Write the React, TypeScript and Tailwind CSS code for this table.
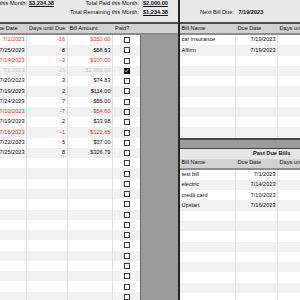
import React from "react";

type Row = { date?: string; days?: string; amt?: string; red?: boolean; paid?: boolean };

const leftRows: Row[] = [
  { date: "7/1/2023", days: "-16", amt: "$250.00", red: true },
  { date: "7/25/2023", days: "8", amt: "$58.53" },
  { date: "7/14/2023", days: "-3", amt: "$107.00", red: true },
  { date: "7/1/2023", days: "-16", amt: "$2,000.00", paid: true },
  { date: "7/20/2023", days: "3", amt: "$74.83" },
  { date: "7/19/2023", days: "2", amt: "$114.00" },
  { date: "7/24/2023", days: "7", amt: "$55.00" },
  { date: "7/10/2023", days: "-7", amt: "$54.60", red: true },
  { date: "7/19/2023", days: "2", amt: "$33.98" },
  { date: "7/16/2023", days: "-1", amt: "$122.65", red: true },
  { date: "7/22/2023", days: "5", amt: "$37.00" },
  { date: "7/25/2023", days: "8", amt: "$326.79" },
];
while (leftRows.length < 27) leftRows.push({});

const upcoming = [
  { name: "car insurance", date: "7/19/2023" },
  { name: "Affirm", date: "7/19/2023" },
];
const pastDue = [
  { name: "test bill", date: "7/1/2023" },
  { name: "electric", date: "7/14/2023" },
  { name: "credit card", date: "7/10/2023" },
  { name: "Upstart", date: "7/16/2023" },
];

function Box({ checked }: { checked?: boolean }) {
  if (checked) {
    return (
      <div className="w-[6px] h-[6px] bg-[#111] flex items-center justify-center">
        <svg viewBox="0 0 6 6" className="w-[5px] h-[5px]">
          <path d="M1 3.1 L2.4 4.5 L5 1.3" stroke="white" strokeWidth="1" fill="none" />
        </svg>
      </div>
    );
  }
  return <div className="w-[6px] h-[6px] bg-white border border-[#3a3a3a]" />;
}

function BillRows({ items, count }: { items: { name: string; date: string }[]; count: number }) {
  const rows = Array.from({ length: count }, (_, i) => items[i]);
  return (
    <>
      {rows.map((r, i) => (
        <div key={i} className={`flex h-[10.27px] shrink-0 items-center ${i % 2 === 0 ? "bg-white" : "bg-[#f2f2f2]"}`}>
          <div className="w-[56px] h-full flex items-center pl-[1.5px] border-r border-[#e2e2e2] whitespace-nowrap">{r?.name}</div>
          <div className="w-[42px] h-full flex items-center justify-end pr-[1.5px] border-r border-[#e2e2e2]">{r?.date}</div>
          <div className="w-[45px] h-full border-r border-[#e2e2e2]" />
        </div>
      ))}
    </>
  );
}

function BillHeader() {
  return (
    <div className="flex h-[9px] shrink-0 items-center bg-[#d2d2d2] whitespace-nowrap">
      <div className="w-[56px] pl-[1.5px]">Bill Name</div>
      <div className="w-[42px] pl-[1.5px]">Due Date</div>
      <div className="w-[45px] pl-[1.5px]">Days until Due</div>
    </div>
  );
}

export default function App() {
  return (
    <div className="w-[300px] h-[300px] overflow-hidden bg-white text-[#111] text-[5.6px] leading-none font-['Liberation_Sans',Arial,sans-serif]">
      <div className="flex ml-[-9px] w-[420px] h-[300px]">
        {/* LEFT */}
        <div className="w-[187px] shrink-0 flex flex-col">
          <div className="h-[24px] shrink-0 bg-[#e9e9e9] border-b-2 border-[#4d4d4d] flex flex-col">
            <div className="h-[7px] flex items-center whitespace-nowrap">
              <div className="w-[36px] flex justify-end">
                <span>Total Due this Month:</span>
              </div>
              <div className="w-[112px] flex justify-between items-center">
                <span className="pl-[2px] font-bold underline">$3,234.38</span>
                <span>Total Paid this Month:</span>
              </div>
              <span className="pl-[4px] font-bold underline">$2,000.00</span>
            </div>
            <div className="h-[7px] mt-[2px] flex items-center whitespace-nowrap">
              <div className="w-[36px]" />
              <div className="w-[112px] flex justify-end">
                <span>Total Remaining this Month:</span>
              </div>
              <span className="pl-[4px] font-bold underline">$1,234.38</span>
            </div>
          </div>
          <div className="h-[11px] shrink-0 bg-[#d2d2d2] border-b-2 border-[#8c8c8c] flex items-center whitespace-nowrap">
            <div className="w-[36px] pl-[3px]">Due Date</div>
            <div className="w-[41px] pl-[2px]">Days until Due</div>
            <div className="w-[45px] pl-[1.5px]">Bill Amount</div>
            <div className="w-[27px] pl-[2px]">Paid?</div>
          </div>
          <div className="flex flex-1 min-h-0">
            <div className="w-[149px] flex flex-col">
              {leftRows.map((r, i) => {
                const color = r.paid ? "text-[#c4c4c4]" : r.red ? "text-[#e3312d]" : "";
                return (
                  <div key={i} className={`flex h-[10.27px] shrink-0 ${i % 2 === 0 ? "bg-white" : "bg-[#f2f2f2]"} ${color}`}>
                    <div className="w-[36px] h-full flex items-center justify-end pr-[1.5px] border-r border-[#e0e0e0]">{r.date}</div>
                    <div className="w-[41px] h-full flex items-center justify-end pr-[2px] border-r border-[#e0e0e0]">{r.days}</div>
                    <div className="w-[45px] h-full flex items-center justify-end pr-[1.5px] border-r border-[#e0e0e0]">{r.amt}</div>
                    <div className="w-[27px] h-full flex items-center justify-center">
                      <Box checked={r.paid} />
                    </div>
                  </div>
                );
              })}
            </div>
            <div className="w-[38px] bg-[#9b9b9b] border-l border-[#6a6a6a]" />
          </div>
        </div>

        {/* SEPARATOR */}
        <div className="w-[2px] shrink-0 bg-[#262626]" />

        {/* RIGHT */}
        <div className="w-[220px] shrink-0 flex flex-col">
          <div className="h-[24px] shrink-0 bg-[#e9e9e9] border-b-2 border-[#4d4d4d] flex items-center pt-[4px] pl-[20px] whitespace-nowrap">
            <span>Next Bill Due:</span>
            <span className="ml-[4.5px] font-bold">7/19/2023</span>
          </div>
          <div className="border-b-2 border-[#8c8c8c]">
            <BillHeader />
          </div>
          <BillRows items={upcoming} count={10} />
          <div className="h-[11px] shrink-0 bg-[#9b9b9b] border-t-2 border-b border-[#444]" />
          <div className="h-[10px] shrink-0 bg-[#e6e6e6] flex items-center pl-[73px] font-bold">Past Due Bills</div>
          <div className="border-b-2 border-[#8c8c8c]">
            <BillHeader />
          </div>
          <BillRows items={pastDue} count={14} />
        </div>
      </div>
    </div>
  );
}
